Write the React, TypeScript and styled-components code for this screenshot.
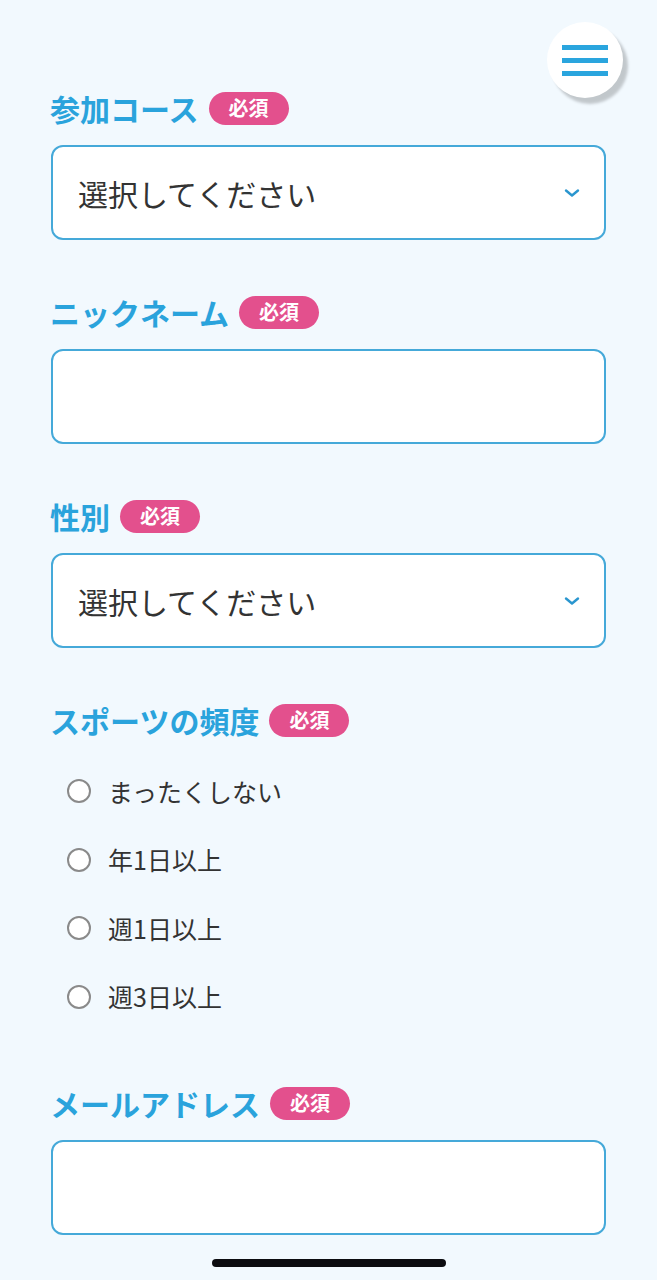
import styled, { createGlobalStyle } from "styled-components";

const GlobalStyle = createGlobalStyle`
  html, body {
    margin: 0;
    padding: 0;
    background: #f2f9fe;
    height: 1280px;
    overflow: hidden;
  }
  * { box-sizing: border-box; }
`;

const radioOptions = ["まったくしない", "年1日以上", "週1日以上", "週3日以上"];

export default function App() {
  return (
    <>
      <GlobalStyle />
      <Page>
        <MenuButton aria-label="menu">
          <MenuLine />
          <MenuLine />
          <MenuLine />
        </MenuButton>

        <Field>
          <LabelRow>
            <LabelText>参加コース</LabelText>
            <Badge>必須</Badge>
          </LabelRow>
          <SelectBox>
            <span>選択してください</span>
            <Chevron />
          </SelectBox>
        </Field>

        <Field>
          <LabelRow>
            <LabelText>ニックネーム</LabelText>
            <Badge>必須</Badge>
          </LabelRow>
          <TextInput type="text" />
        </Field>

        <Field>
          <LabelRow>
            <LabelText>性別</LabelText>
            <Badge>必須</Badge>
          </LabelRow>
          <SelectBox>
            <span>選択してください</span>
            <Chevron />
          </SelectBox>
        </Field>

        <Field>
          <LabelRow>
            <LabelText>スポーツの頻度</LabelText>
            <Badge>必須</Badge>
          </LabelRow>
          <RadioList>
            {radioOptions.map((opt) => (
              <RadioRow key={opt}>
                <RadioCircle />
                <RadioText>{opt}</RadioText>
              </RadioRow>
            ))}
          </RadioList>
        </Field>

        <Field>
          <LabelRow>
            <LabelText>メールアドレス</LabelText>
            <Badge>必須</Badge>
          </LabelRow>
          <TextInput type="email" />
        </Field>
      </Page>
      <HomeBar />
    </>
  );
}

function Chevron() {
  return (
    <svg width="16" height="10" viewBox="0 0 16 10" fill="none">
      <path
        d="M2 2.5 L8 7.5 L14 2.5"
        stroke="#2a96cf"
        strokeWidth="2.4"
        strokeLinecap="round"
        strokeLinejoin="round"
      />
    </svg>
  );
}

const Page = styled.div`
  position: relative;
  padding: 88px 51px 0 51px;
  display: flex;
  flex-direction: column;
  gap: 52px;
  font-family: "Noto Sans CJK JP", "Noto Sans", sans-serif;
`;

const MenuButton = styled.button`
  position: absolute;
  top: 22px;
  left: 547px;
  width: 76px;
  height: 76px;
  border-radius: 50%;
  border: none;
  background: #fff;
  box-shadow: 5px 6px 3px rgba(0, 0, 0, 0.2);
  display: flex;
  flex-direction: column;
  align-items: center;
  justify-content: center;
  gap: 8px;
  padding: 0;
`;

const MenuLine = styled.span`
  display: block;
  width: 46px;
  height: 5px;
  background: #2aa5de;
`;

const Field = styled.div`
  display: flex;
  flex-direction: column;
  gap: 17px;
`;

const LabelRow = styled.div`
  display: flex;
  align-items: center;
  gap: 10px;
  height: 40px;
  margin-left: -1px;
`;

const LabelText = styled.span`
  font-size: 30px;
  font-weight: 700;
  color: #2aa3dc;
  line-height: 1;
`;

const Badge = styled.span`
  display: inline-flex;
  align-items: center;
  justify-content: center;
  width: 80px;
  height: 33px;
  border-radius: 17px;
  background: #e3508d;
  color: #fff;
  font-size: 20px;
  font-weight: 700;
  line-height: 1;
`;

const SelectBox = styled.div`
  height: 95px;
  border: 2px solid #45a9d9;
  border-radius: 12px;
  background: #fff;
  display: flex;
  align-items: center;
  justify-content: space-between;
  padding: 0 24px 0 25px;
  font-size: 30px;
  color: #333;
`;

const TextInput = styled.input`
  height: 95px;
  width: 100%;
  border: 2px solid #45a9d9;
  border-radius: 12px;
  background: #fff;
  padding: 0 25px;
  font-size: 30px;
  font-family: inherit;
  outline: none;
`;

const RadioList = styled.div`
  display: flex;
  flex-direction: column;
`;

const RadioRow = styled.label`
  height: 68.5px;
  display: flex;
  align-items: center;
  padding-left: 16px;
  gap: 17px;
`;

const RadioCircle = styled.span`
  width: 24px;
  height: 24px;
  border-radius: 50%;
  border: 2px solid #8a8a8a;
  background: #fff;
`;

const RadioText = styled.span`
  font-size: 25px;
  color: #333;
  line-height: 1;
`;

const HomeBar = styled.div`
  position: fixed;
  left: 212px;
  top: 1259px;
  width: 234px;
  height: 8px;
  border-radius: 4px;
  background: #0c0c10;
`;
